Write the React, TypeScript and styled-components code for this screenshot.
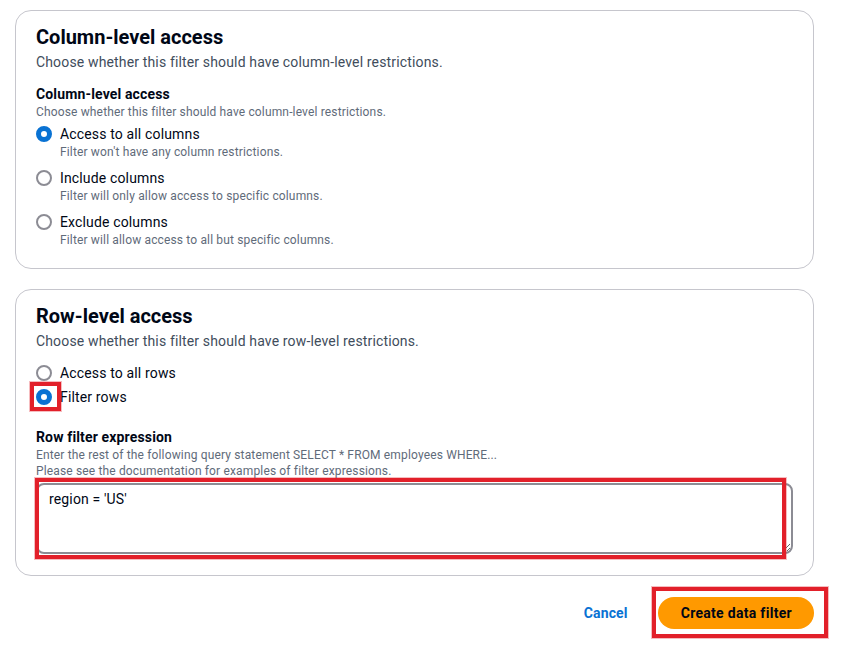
import React, { useState } from 'react';
import styled, { createGlobalStyle } from 'styled-components';

const GlobalStyle = createGlobalStyle`
  html, body {
    margin: 0;
    padding: 0;
    background: #ffffff;
  }
  body {
    font-family: Roboto, "Open Sans", Arial, sans-serif;
    color: #000716;
    letter-spacing: 0.15px;
  }
`;

const Page = styled.div`
  width: 814px;
  min-height: 659px;
  box-sizing: border-box;
  padding: 10px 0 30px 15px;
  display: flex;
  flex-direction: column;
  gap: 20px;
`;

const Card = styled.section`
  border: 1px solid #c6c6cd;
  border-radius: 16px;
  padding: 14px 20px 20px;
  background: #ffffff;
  display: flex;
  flex-direction: column;
`;

const Title = styled.h2`
  margin: 0;
  font-size: 20px;
  line-height: 24px;
  font-weight: 700;
  letter-spacing: 0;
  color: #000716;
`;

const Lead = styled.p`
  margin: 3px 0 0;
  font-size: 14px;
  line-height: 20px;
  color: #414d5c;
`;

const FieldLabel = styled.div<{ $gap: number }>`
  margin-top: ${({ $gap }) => $gap}px;
  font-size: 14px;
  line-height: 20px;
  font-weight: 700;
  color: #000716;
`;

const FieldHint = styled.div`
  font-size: 12px;
  line-height: 16px;
  color: #5f6b7a;
`;

const RadioGroup = styled.div<{ $gap: number; $spacing: number }>`
  margin-top: ${({ $gap }) => $gap}px;
  display: flex;
  flex-direction: column;
  gap: ${({ $spacing }) => $spacing}px;
`;

const RadioRow = styled.label`
  display: grid;
  grid-template-columns: 16px 1fr;
  column-gap: 8px;
  cursor: pointer;
`;

const DotSlot = styled.span`
  position: relative;
  width: 16px;
  height: 16px;
  margin-top: 2px;
`;

const Dot = styled.span<{ $checked: boolean }>`
  display: block;
  width: 16px;
  height: 16px;
  box-sizing: border-box;
  border-radius: 50%;
  border: ${({ $checked }) => ($checked ? '5px solid #0972d3' : '2px solid #8c8c94')};
  background: #ffffff;
`;

const RadioText = styled.span`
  font-size: 14px;
  line-height: 20px;
  color: #000716;
`;

const RadioHint = styled.span`
  grid-column: 2;
  font-size: 12px;
  line-height: 16px;
  color: #5f6b7a;
`;

const Annotated = styled.div`
  position: relative;
`;

// red review marks drawn over the screenshot
const Highlight = styled.span<{ $t: number; $r: number; $b: number; $l: number }>`
  position: absolute;
  top: ${({ $t }) => $t}px;
  right: ${({ $r }) => $r}px;
  bottom: ${({ $b }) => $b}px;
  left: ${({ $l }) => $l}px;
  border: 4px solid #e2202a;
  box-shadow: 0 0 0 1px rgba(226, 32, 42, 0.3);
  pointer-events: none;
`;

const TextArea = styled.textarea`
  display: block;
  width: 100%;
  height: 71px;
  margin: 4px 0 1px;
  box-sizing: border-box;
  padding: 4px 11px;
  border: 2px solid #8c8c94;
  border-radius: 8px;
  font-family: Roboto, "Open Sans", Arial, sans-serif;
  font-size: 14px;
  line-height: 20px;
  letter-spacing: 0.15px;
  color: #000716;
  resize: vertical;
  outline: none;
`;

const Actions = styled.div`
  display: flex;
  justify-content: flex-end;
  align-items: center;
  gap: 30px;
  margin-top: 1px;
`;

const LinkButton = styled.button`
  border: none;
  background: none;
  padding: 0;
  font-family: Roboto, "Open Sans", Arial, sans-serif;
  font-size: 14px;
  font-weight: 700;
  letter-spacing: 0.15px;
  color: #0972d3;
  cursor: pointer;
`;

const PrimaryButton = styled.button`
  display: block;
  height: 32px;
  padding: 0 22px 0 23px;
  border: none;
  border-radius: 16px;
  background: #ff9900;
  font-family: Roboto, "Open Sans", Arial, sans-serif;
  font-size: 14px;
  font-weight: 700;
  letter-spacing: 0.3px;
  color: #000716;
  cursor: pointer;
`;

const columnOptions = [
  { id: 'all', label: 'Access to all columns', hint: "Filter won't have any column restrictions." },
  { id: 'include', label: 'Include columns', hint: 'Filter will only allow access to specific columns.' },
  { id: 'exclude', label: 'Exclude columns', hint: 'Filter will allow access to all but specific columns.' },
];

const rowOptions = [
  { id: 'all', label: 'Access to all rows' },
  { id: 'filter', label: 'Filter rows' },
];

const App = () => {
  const [columnAccess, setColumnAccess] = useState('all');
  const [rowAccess, setRowAccess] = useState('filter');
  const [expression, setExpression] = useState("region = 'US'");

  return (
    <>
      <GlobalStyle />
      <Page>
        <Card>
          <Title>Column-level access</Title>
          <Lead>Choose whether this filter should have column-level restrictions.</Lead>
          <FieldLabel $gap={12}>Column-level access</FieldLabel>
          <FieldHint>Choose whether this filter should have column-level restrictions.</FieldHint>
          <RadioGroup $gap={4} $spacing={8}>
            {columnOptions.map(option => (
              <RadioRow key={option.id} onClick={() => setColumnAccess(option.id)}>
                <DotSlot>
                  <Dot $checked={columnAccess === option.id} />
                </DotSlot>
                <RadioText>{option.label}</RadioText>
                <RadioHint>{option.hint}</RadioHint>
              </RadioRow>
            ))}
          </RadioGroup>
        </Card>

        <Card>
          <Title>Row-level access</Title>
          <Lead>Choose whether this filter should have row-level restrictions.</Lead>
          <RadioGroup $gap={12} $spacing={4}>
            {rowOptions.map(option => (
              <RadioRow key={option.id} onClick={() => setRowAccess(option.id)}>
                <DotSlot>
                  <Dot $checked={rowAccess === option.id} />
                  {option.id === 'filter' && <Highlight $t={-7} $r={-9} $b={-6} $l={-6} />}
                </DotSlot>
                <RadioText>{option.label}</RadioText>
              </RadioRow>
            ))}
          </RadioGroup>
          <FieldLabel $gap={20}>Row filter expression</FieldLabel>
          <FieldHint>
            Enter the rest of the following query statement SELECT * FROM employees WHERE...
            <br />
            Please see the documentation for examples of filter expressions.
          </FieldHint>
          <Annotated>
            <TextArea value={expression} onChange={e => setExpression(e.target.value)} />
            <Highlight $t={-1} $r={7} $b={-4} $l={-1} />
          </Annotated>
        </Card>

        <Actions>
          <LinkButton>Cancel</LinkButton>
          <Annotated>
            <PrimaryButton>Create data filter</PrimaryButton>
            <Highlight $t={-10} $r={-14} $b={-9} $l={-6} />
          </Annotated>
        </Actions>
      </Page>
    </>
  );
};

export default App;
